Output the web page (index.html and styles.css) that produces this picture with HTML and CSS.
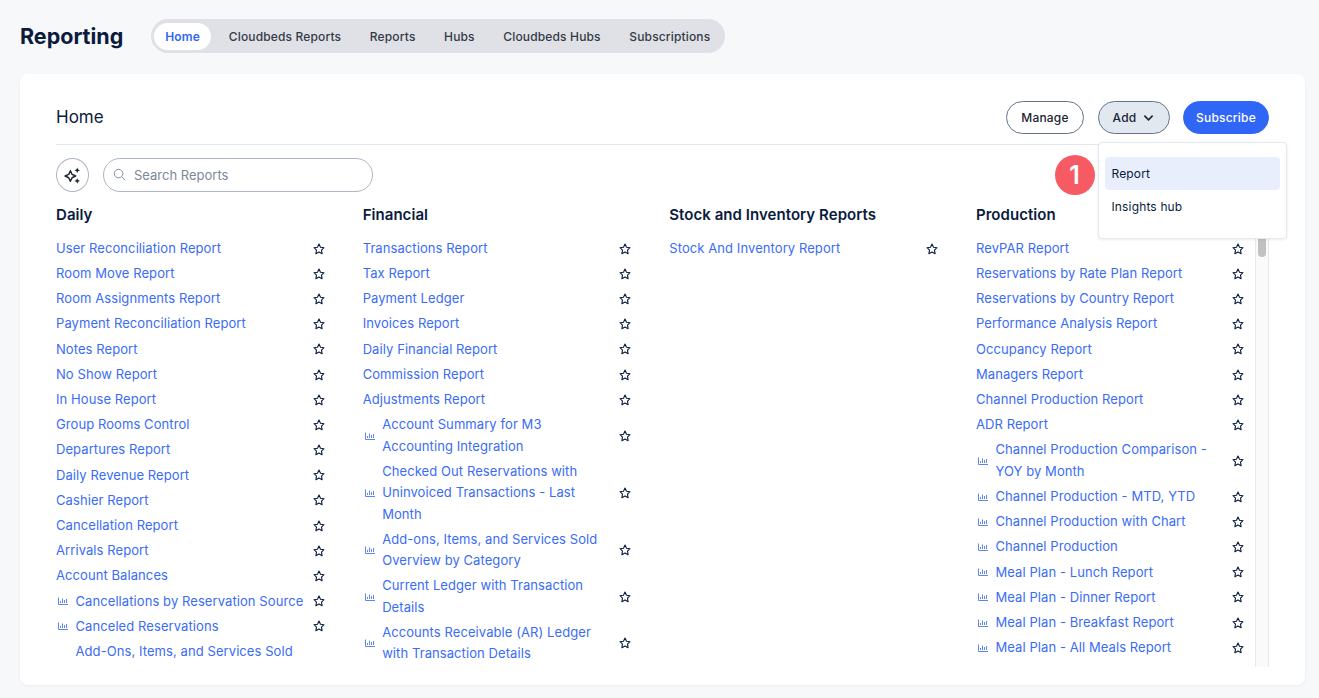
FILE: index.html
```html
<!DOCTYPE html>
<html lang="en">
<head>
<meta charset="utf-8">
<title>Reporting</title>
<link rel="stylesheet" href="styles.css">
</head>
<body>
<svg class="defs" width="0" height="0" aria-hidden="true">
  <symbol id="star" viewBox="0 0 12 12"><path d="M6 1 7.5 4.2 11 4.7 8.5 7.1 9.1 10.7 6 9 2.9 10.7 3.5 7.1 1 4.7 4.5 4.2Z" fill="none" stroke="currentColor" stroke-width="1.1" stroke-linejoin="round"/></symbol>
  <symbol id="chart" viewBox="0 0 10 8"><path d="M.5 .5V7.5H10M2.5 6V4M4.5 6V1.5M6.5 6V3M8.5 6V2" fill="none" stroke="currentColor" stroke-width="1"/></symbol>
</svg>
<header class="topbar">
  <h1 class="app-title">Reporting</h1>
  <nav class="tabs">
    <a class="tab tab-active">Home</a>
    <a class="tab">Cloudbeds Reports</a>
    <a class="tab">Reports</a>
    <a class="tab">Hubs</a>
    <a class="tab">Cloudbeds Hubs</a>
    <a class="tab">Subscriptions</a>
  </nav>
</header>
<main class="card">
  <div class="card-head">
    <h2 class="card-title">Home</h2>
    <div class="actions">
      <button class="btn btn-outline btn-manage">Manage</button>
      <div class="add-wrap">
        <button class="btn btn-add">Add
          <svg class="chev" viewBox="0 0 12 8" width="11" height="8"><path d="M1.5 1.5 6 6l4.5-4.5" fill="none" stroke="currentColor" stroke-width="1.8"/></svg>
        </button>
        <div class="menu">
          <div class="menu-item menu-item-active">Report</div>
          <div class="menu-item">Insights hub</div>
        </div>
        <span class="badge">1</span>
      </div>
      <button class="btn btn-primary">Subscribe</button>
    </div>
  </div>
  <div class="tools">
    <button class="ai-btn" aria-label="AI search">
      <svg viewBox="0 0 18 18" width="19" height="19"><path d="M7 4.5 8.6 8l3.4 1.5-3.4 1.6L7 14.5l-1.6-3.4L2 9.5 5.4 8Z" fill="none" stroke="currentColor" stroke-width="1.4" stroke-linejoin="round"/><path d="M13.5 1.5l.8 1.8 1.8.8-1.8.8-.8 1.8-.8-1.8-1.8-.8 1.8-.8ZM13.5 11.5l.8 1.8 1.8.8-1.8.8-.8 1.8-.8-1.8-1.8-.8 1.8-.8Z" fill="currentColor"/></svg>
    </button>
    <label class="search">
      <svg viewBox="0 0 14 14" width="13" height="13"><circle cx="6" cy="6" r="4.6" fill="none" stroke="currentColor" stroke-width="1"/><path d="m9.5 9.5 3.6 3.6" stroke="currentColor" stroke-width="1"/></svg>
      <span>Search Reports</span>
    </label>
  </div>
  <div class="scroller">
    <div class="grid">
      <section class="col">
        <h3 class="col-title">Daily</h3>
        <ul class="list">
          <li class="row"><a>User Reconciliation Report</a><svg class="star"><use href="#star"/></svg></li>
          <li class="row"><a>Room Move Report</a><svg class="star"><use href="#star"/></svg></li>
          <li class="row"><a>Room Assignments Report</a><svg class="star"><use href="#star"/></svg></li>
          <li class="row"><a>Payment Reconciliation Report</a><svg class="star"><use href="#star"/></svg></li>
          <li class="row"><a>Notes Report</a><svg class="star"><use href="#star"/></svg></li>
          <li class="row"><a>No Show Report</a><svg class="star"><use href="#star"/></svg></li>
          <li class="row"><a>In House Report</a><svg class="star"><use href="#star"/></svg></li>
          <li class="row"><a>Group Rooms Control</a><svg class="star"><use href="#star"/></svg></li>
          <li class="row"><a>Departures Report</a><svg class="star"><use href="#star"/></svg></li>
          <li class="row"><a>Daily Revenue Report</a><svg class="star"><use href="#star"/></svg></li>
          <li class="row"><a>Cashier Report</a><svg class="star"><use href="#star"/></svg></li>
          <li class="row"><a>Cancellation Report</a><svg class="star"><use href="#star"/></svg></li>
          <li class="row"><a>Arrivals Report</a><svg class="star"><use href="#star"/></svg></li>
          <li class="row"><a>Account Balances</a><svg class="star"><use href="#star"/></svg></li>
          <li class="row"><svg class="chart"><use href="#chart"/></svg><a>Cancellations by Reservation Source</a><svg class="star"><use href="#star"/></svg></li>
          <li class="row"><svg class="chart"><use href="#chart"/></svg><a>Canceled Reservations</a><svg class="star"><use href="#star"/></svg></li>
          <li class="row"><span class="chart"></span><a>Add-Ons, Items, and Services Sold</a></li>
        </ul>
      </section>
      <section class="col">
        <h3 class="col-title">Financial</h3>
        <ul class="list">
          <li class="row"><a>Transactions Report</a><svg class="star"><use href="#star"/></svg></li>
          <li class="row"><a>Tax Report</a><svg class="star"><use href="#star"/></svg></li>
          <li class="row"><a>Payment Ledger</a><svg class="star"><use href="#star"/></svg></li>
          <li class="row"><a>Invoices Report</a><svg class="star"><use href="#star"/></svg></li>
          <li class="row"><a>Daily Financial Report</a><svg class="star"><use href="#star"/></svg></li>
          <li class="row"><a>Commission Report</a><svg class="star"><use href="#star"/></svg></li>
          <li class="row"><a>Adjustments Report</a><svg class="star"><use href="#star"/></svg></li>
          <li class="row"><svg class="chart"><use href="#chart"/></svg><a>Account Summary for M3<br>Accounting Integration</a><svg class="star"><use href="#star"/></svg></li>
          <li class="row"><svg class="chart"><use href="#chart"/></svg><a>Checked Out Reservations with<br>Uninvoiced Transactions - Last<br>Month</a><svg class="star"><use href="#star"/></svg></li>
          <li class="row"><svg class="chart"><use href="#chart"/></svg><a>Add-ons, Items, and Services Sold<br>Overview by Category</a><svg class="star"><use href="#star"/></svg></li>
          <li class="row"><svg class="chart"><use href="#chart"/></svg><a>Current Ledger with Transaction<br>Details</a><svg class="star"><use href="#star"/></svg></li>
          <li class="row"><svg class="chart"><use href="#chart"/></svg><a>Accounts Receivable (AR) Ledger<br>with Transaction Details</a><svg class="star"><use href="#star"/></svg></li>
        </ul>
      </section>
      <section class="col">
        <h3 class="col-title">Stock and Inventory Reports</h3>
        <ul class="list">
          <li class="row"><a>Stock And Inventory Report</a><svg class="star"><use href="#star"/></svg></li>
        </ul>
      </section>
      <section class="col">
        <h3 class="col-title">Production</h3>
        <ul class="list">
          <li class="row"><a>RevPAR Report</a><svg class="star"><use href="#star"/></svg></li>
          <li class="row"><a>Reservations by Rate Plan Report</a><svg class="star"><use href="#star"/></svg></li>
          <li class="row"><a>Reservations by Country Report</a><svg class="star"><use href="#star"/></svg></li>
          <li class="row"><a>Performance Analysis Report</a><svg class="star"><use href="#star"/></svg></li>
          <li class="row"><a>Occupancy Report</a><svg class="star"><use href="#star"/></svg></li>
          <li class="row"><a>Managers Report</a><svg class="star"><use href="#star"/></svg></li>
          <li class="row"><a>Channel Production Report</a><svg class="star"><use href="#star"/></svg></li>
          <li class="row"><a>ADR Report</a><svg class="star"><use href="#star"/></svg></li>
          <li class="row"><svg class="chart"><use href="#chart"/></svg><a>Channel Production Comparison -<br>YOY by Month</a><svg class="star"><use href="#star"/></svg></li>
          <li class="row"><svg class="chart"><use href="#chart"/></svg><a>Channel Production - MTD, YTD</a><svg class="star"><use href="#star"/></svg></li>
          <li class="row"><svg class="chart"><use href="#chart"/></svg><a>Channel Production with Chart</a><svg class="star"><use href="#star"/></svg></li>
          <li class="row"><svg class="chart"><use href="#chart"/></svg><a>Channel Production</a><svg class="star"><use href="#star"/></svg></li>
          <li class="row"><svg class="chart"><use href="#chart"/></svg><a>Meal Plan - Lunch Report</a><svg class="star"><use href="#star"/></svg></li>
          <li class="row"><svg class="chart"><use href="#chart"/></svg><a>Meal Plan - Dinner Report</a><svg class="star"><use href="#star"/></svg></li>
          <li class="row"><svg class="chart"><use href="#chart"/></svg><a>Meal Plan - Breakfast Report</a><svg class="star"><use href="#star"/></svg></li>
          <li class="row"><svg class="chart"><use href="#chart"/></svg><a>Meal Plan - All Meals Report</a><svg class="star"><use href="#star"/></svg></li>
        </ul>
      </section>
    </div>
    <div class="track"><div class="thumb"></div></div>
  </div>
</main>
</body>
</html>
```
FILE: styles.css
```css
* { box-sizing: border-box; }
html, body { height: 100%; }
body {
  margin: 0;
  height: 698px;
  overflow: hidden;
  background: #f7f8fa;
  color: #0a1b3d;
  font-family: "Inter", "Liberation Sans", sans-serif;
  letter-spacing: .15px;
  display: flex;
  flex-direction: column;
}
.defs { position: absolute; }
.topbar {
  height: 74px;
  padding: 19px 20px 0;
  display: flex;
  align-items: flex-start;
  gap: 28px;
  flex: none;
}
.app-title { margin: 0; font-size: 21.5px; line-height: 34px; font-weight: 700; letter-spacing: 0; }
.tabs {
  height: 34px;
  background: #dfe1e6;
  border-radius: 17px;
  padding: 3px 0 3px 3px;
  display: flex;
  align-items: center;
}
.tab {
  height: 27px;
  padding: 0 14.3px;
  display: flex;
  align-items: center;
  font-size: 12px;
  font-weight: 500;
  color: #343a46;
  border-radius: 14px;
}
.tab-active { background: #fff; color: #2f66f6; font-weight: 600; padding: 0 11px; margin-right: 3.5px; }
.card {
  width: 1285px;
  height: 611px;
  margin-left: 20px;
  flex: none;
  background: #fff;
  border-radius: 8px;
  box-shadow: 0 1px 3px rgba(20, 30, 60, .06);
  padding: 27px 36px 18px;
  display: flex;
  flex-direction: column;
}
.card-head {
  height: 44px;
  flex: none;
  display: flex;
  justify-content: space-between;
  align-items: flex-start;
  border-bottom: 1px solid #e2e8f0;
}
.card-title { margin: 0; font-size: 17px; line-height: 33px; font-weight: 400; letter-spacing: 0; }
.actions { display: flex; gap: 13.5px; }
.btn {
  height: 33px;
  border-radius: 17px;
  font: 500 12px "Inter", sans-serif;
  letter-spacing: .2px;
  padding: 0;
  display: flex;
  align-items: center;
  justify-content: center;
  color: #1c2433;
}
.btn-manage { width: 78px; }
.btn-outline { background: #fff; border: 1px solid #64748b; }
.btn-add { width: 72px; gap: 7px; background: #e2e8f0; border: 1px solid #64748b; }
.btn-primary { width: 86px; background: #2f66f6; border: 1px solid #2f66f6; color: #fff; }
.add-wrap { position: relative; }
.menu {
  position: absolute;
  top: 41px;
  left: 0;
  width: 189px;
  height: 97px;
  background: #fff;
  border: 1px solid #e2e8f0;
  border-radius: 4px;
  box-shadow: 0 1px 3px rgba(20, 30, 60, .08);
  padding: 14px 6px 0;
  z-index: 5;
}
.menu-item { height: 33px; font-size: 12px; display: flex; align-items: center; padding-left: 7px; border-radius: 4px; }
.menu-item-active { background: #e8eefc; }
.badge {
  position: absolute;
  top: 54px;
  left: -43px;
  width: 40px;
  height: 40px;
  border-radius: 50%;
  background: #f65a62;
  color: #fff;
  font-size: 25px;
  font-weight: 600;
  display: flex;
  align-items: center;
  justify-content: center;
  z-index: 6;
}
.tools { flex: none; display: flex; gap: 14px; padding-top: 13px; height: 47px; }
.ai-btn {
  width: 33px;
  height: 34px;
  border-radius: 50%;
  border: 1px solid #aeb6c2;
  background: #fff;
  color: #1c2433;
  padding: 0;
  display: flex;
  align-items: center;
  justify-content: center;
}
.search {
  width: 270px;
  height: 34px;
  border: 1px solid #aeb6c2;
  border-radius: 17px;
  display: flex;
  align-items: center;
  gap: 8px;
  padding: 0 0 1px 9px;
  font-size: 13px;
  letter-spacing: 0;
  color: #7c8798;
}
.scroller {
  flex: 1;
  min-height: 0;
  overflow: hidden;
  position: relative;
}
.track {
  position: absolute;
  top: 0;
  right: 0;
  bottom: 0;
  width: 14.5px;
  background: #fafafa;
  border-left: 1px solid #e8e8e8;
  border-right: 1px solid #e8e8e8;
}
.thumb {
  width: 8px;
  height: 65px;
  margin-left: 2.5px;
  background: #c1c1c1;
  border-radius: 4px;
}
.grid {
  display: grid;
  grid-template-columns: repeat(4, 268.5px);
  column-gap: 38.17px;
  align-content: start;
}
.col { min-width: 0; padding-top: 12px; }
.col-title { margin: 0 0 10px; font-size: 15px; line-height: 22px; font-weight: 600; letter-spacing: .05px; }
.list { list-style: none; margin: 0; padding: 0; }
.row {
  display: flex;
  align-items: center;
  gap: 7.5px;
  padding: 1.9px 0;
  font-size: 13px;
  line-height: 21.4px;
  letter-spacing: .08px;
  color: #3a6cf6;
}
.row a { flex: 1; min-width: 0; }
.chart { width: 10px; height: 8px; flex: none; color: #5f86ee; margin-left: 2px; }
.star { width: 12px; height: 12px; flex: none; color: #0a1b3d; margin-left: -4px; }
```
